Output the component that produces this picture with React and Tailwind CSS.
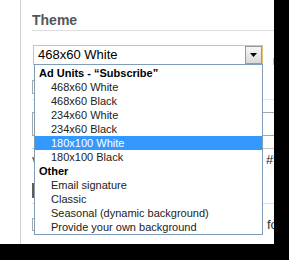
const adUnits = ['468x60 White', '468x60 Black', '234x60 White', '234x60 Black', '180x100 White', '180x100 Black'];
const others = ['Email signature', 'Classic', 'Seasonal (dynamic background)', 'Provide your own background'];

const App = () => {
  return (
    <div className="w-[289px] h-[260px] bg-black font-['Liberation_Sans',Arial,sans-serif]">
      <div className="w-[274px] h-[244px] overflow-hidden bg-white flex">
        <div className="w-[20px] shrink-0" />
        <div className="w-px shrink-0 bg-[#cfcfcf]" />

        <div className="flex-1 min-w-0 pl-[11px]">
          <h2 className="pt-[12px] text-[14px] leading-[16px] font-bold text-[#555]">Theme</h2>
          <div className="mt-[2px] h-px bg-[#dedede]" />

          {/* Select with open list */}
          <div className="mt-[14px] flex">
            <div className="relative ml-px w-[230px] h-[20px] border border-[#e5c27a] flex shrink-0">
              <div className="flex-1 pl-[4px] text-[13px] leading-[18px] text-black">468x60 White</div>
              <div className="w-[17px] h-full border border-[#9a9a9a] bg-gradient-to-b from-[#f6f6f6] to-[#d9d9d9] flex items-center justify-center">
                <svg width="7" height="4" viewBox="0 0 7 4">
                  <polygon points="0,0 7,0 3.5,4" fill="#000" />
                </svg>
              </div>

              <div className="absolute left-0 top-[18px] w-[229px] z-10 border border-[#7f9db9] bg-white pt-px text-[11px] leading-[14px]">
                <div className="h-[14px] pl-[4px] font-bold text-black">Ad Units - “Subscribe”</div>
                {adUnits.map((item) => (
                  <div
                    key={item}
                    className={item === '180x100 White' ? 'h-[14px] pl-[16px] bg-[#3399ff] text-white' : 'h-[14px] pl-[16px] text-[#222]'}
                  >
                    {item}
                  </div>
                ))}
                <div className="h-[14px] pl-[4px] font-bold text-black">Other</div>
                {others.map((item) => (
                  <div key={item} className="h-[14px] pl-[16px] text-[#222]">
                    {item}
                  </div>
                ))}
              </div>
            </div>
            <span className="ml-[10px] mt-[13px] w-[4px] h-[7px] bg-[#e5c27a] shrink-0" />
          </div>

          {/* Form behind the list */}
          <div className="mt-[15px] w-[60px] h-[14px] border border-[#a8a8a8]" />
          <div className="mt-[5px] h-px bg-[#e6e6e6]" />
          <div className="mt-[12px] w-[260px] h-[24px] border border-[#a8a8a8]" />
          <div className="mt-[12px] h-px bg-[#c8c8c8]" />
          <div className="mt-[3px] flex h-[16px] text-[13px] leading-[16px] text-[#444] whitespace-nowrap">
            <span className="w-[234px] shrink-0">visible</span>
            <span className="text-[#222]">#ffffff</span>
          </div>
          <div className="mt-[15px] w-[2px] h-[15px] bg-[#6b5b4b]" />
          <div className="mt-[5px] h-px bg-[#e0e0e0]" />
          <div className="mt-[14px] flex items-center whitespace-nowrap">
            <div className="w-[225px] h-[13px] border border-[#a8a8a8] shrink-0" />
            <span className="ml-[10px] text-[13px] leading-[13px] text-[#333]">for</span>
          </div>
        </div>
      </div>
    </div>
  );
};

export default App;
